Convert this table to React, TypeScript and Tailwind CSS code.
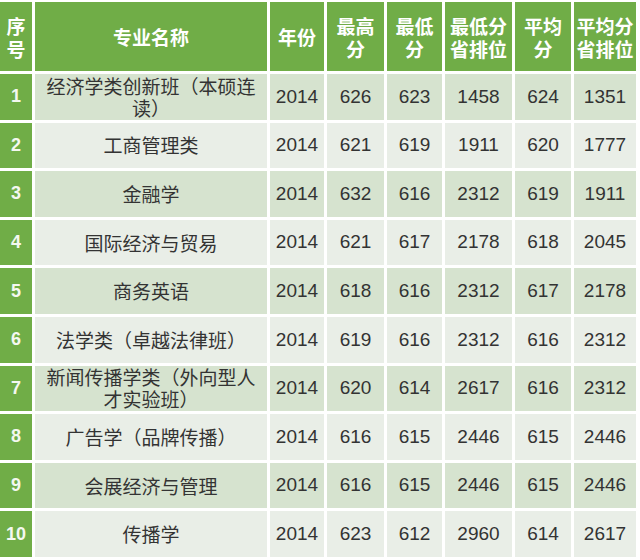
const HEAD = ["序号", "专业名称", "年份", "最高分", "最低分", "最低分省排位", "平均分", "平均分省排位"];

const HEAD_LINES: string[][] = [
  ["序", "号"],
  ["专业名称"],
  ["年份"],
  ["最高", "分"],
  ["最低", "分"],
  ["最低分", "省排位"],
  ["平均", "分"],
  ["平均分", "省排位"],
];

const ROWS: [string, number, number, number, number, number, number][] = [
  ["经济学类创新班（本硕连读）", 2014, 626, 623, 1458, 624, 1351],
  ["工商管理类", 2014, 621, 619, 1911, 620, 1777],
  ["金融学", 2014, 632, 616, 2312, 619, 1911],
  ["国际经济与贸易", 2014, 621, 617, 2178, 618, 2045],
  ["商务英语", 2014, 618, 616, 2312, 617, 2178],
  ["法学类（卓越法律班）", 2014, 619, 616, 2312, 616, 2312],
  ["新闻传播学类（外向型人才实验班）", 2014, 620, 614, 2617, 616, 2312],
  ["广告学（品牌传播）", 2014, 616, 615, 2446, 615, 2446],
  ["会展经济与管理", 2014, 616, 615, 2446, 615, 2446],
  ["传播学", 2014, 623, 612, 2960, 614, 2617],
];

const font = "font-['Noto_Sans_CJK_SC','Noto_Sans',sans-serif]";

export default function App() {
  return (
    <div className={`w-[640px] h-[560px] bg-white pt-[2px] ${font}`}>
      <div className="grid grid-cols-[32px_232px_54px_57px_55px_67px_56px_62px] gap-[3px] w-[636px]">
        {HEAD_LINES.map((lines, i) => (
          <div
            key={HEAD[i]}
            className="h-[69px] bg-[#70ad47] text-white font-bold text-[19px] leading-[23px] flex flex-col items-center justify-center"
          >
            {lines.map((l) => (
              <span key={l}>{l}</span>
            ))}
          </div>
        ))}
        {ROWS.map((r, idx) => {
          const bg = idx % 2 === 0 ? "bg-[#d6e3cf]" : "bg-[#e9eee7]";
          return (
            <div key={idx} className="contents">
              <div className="h-[45.6px] bg-[#70ad47] text-[#f4f8f0] font-bold text-[18px] font-['Liberation_Sans',sans-serif] flex items-center justify-center">
                {idx + 1}
              </div>
              <div className={`h-[45.6px] ${bg} px-[6px] flex items-center justify-center text-center text-[19px] leading-[22px] text-[#333]`}>
                {r[0]}
              </div>
              {r.slice(1).map((v, j) => (
                <div
                  key={j}
                  className={`h-[45.6px] ${bg} flex items-center justify-center text-[19px] text-[#333] font-['Liberation_Sans',sans-serif]`}
                >
                  {v}
                </div>
              ))}
            </div>
          );
        })}
      </div>
    </div>
  );
}
